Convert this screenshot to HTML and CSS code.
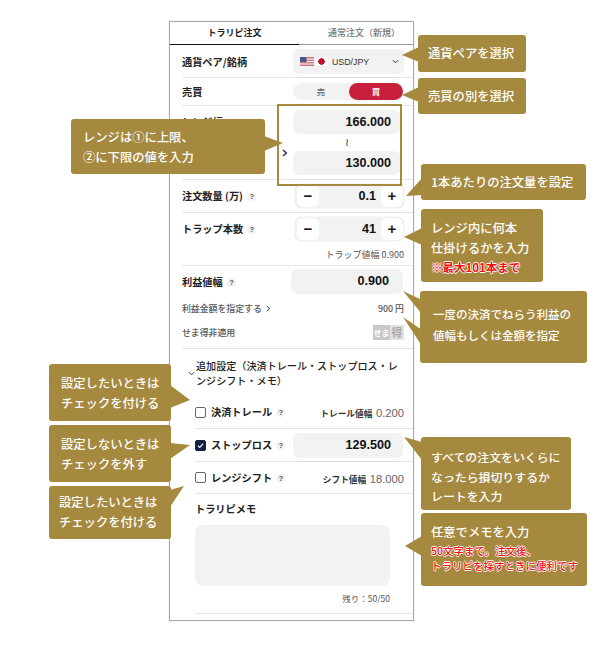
FILE: index.html
```html
<!DOCTYPE html>
<html lang="ja">
<head>
<meta charset="utf-8">
<title>トラリピ注文</title>
<link rel="stylesheet" href="styles.css">
</head>
<body>
<div class="stage">
  <main class="panel">
    <div class="tabs">
      <div class="tab tab-on">トラリピ注文</div>
      <div class="tab tab-off">通常注文（新規）</div>
    </div>

    <div class="row row-pair">
      <span class="label">通貨ペア/銘柄</span>
      <div class="select">
        <svg class="flag" viewBox="0 0 14 9" aria-hidden="true">
          <rect width="14" height="9" fill="#c9737f"/>
          <rect y="1.4" width="14" height="1.2" fill="#f3e8e8"/>
          <rect y="3.9" width="14" height="1.2" fill="#f3e8e8"/>
          <rect y="6.4" width="14" height="1.2" fill="#f3e8e8"/>
          <rect width="6.5" height="5" fill="#4a5688"/>
        </svg>
        <span class="jp-flag"></span>
        <span class="pair-name">USD/JPY</span>
        <svg class="caret" viewBox="0 0 8 5" aria-hidden="true"><path d="M1 1l3 3 3-3" fill="none" stroke="#1d2a44" stroke-width="1.1"/></svg>
      </div>
    </div>

    <div class="row row-side">
      <span class="label">売買</span>
      <div class="toggle">
        <span class="side">売</span>
        <span class="side side-on">買</span>
      </div>
    </div>

    <div class="row row-range">
      <div class="range-label">
        <span class="label">レンジ幅 <span class="help">?</span></span>
        <svg class="chev" viewBox="0 0 6 8" aria-hidden="true"><path d="M1 1l3.4 3L1 7" fill="none" stroke="#14264d" stroke-width="1.3"/></svg>
      </div>
      <div class="range-fields">
        <div class="field field-range">166.000</div>
        <div class="tilde">≀</div>
        <div class="field field-range">130.000</div>
      </div>
    </div>

    <div class="row row-qty">
      <span class="label">注文数量 (万) <span class="help">?</span></span>
      <div class="stepper">
        <span class="step">−</span>
        <span class="step-value">0.1</span>
        <span class="step">+</span>
      </div>
    </div>

    <div class="row row-trap">
      <div class="trap-top">
        <span class="label">トラップ本数 <span class="help">?</span></span>
        <div class="stepper">
          <span class="step">−</span>
          <span class="step-value">41</span>
          <span class="step">+</span>
        </div>
      </div>
      <div class="note">トラップ値幅 0.900</div>
    </div>

    <div class="row row-profit">
      <div class="profit-top">
        <span class="label">利益値幅 <span class="help">?</span></span>
        <div class="field field-profit">0.900</div>
      </div>
      <div class="profit-line profit-amount">
        <span class="small">利益金額を指定する<svg class="chev-sm" viewBox="0 0 6 8" aria-hidden="true"><path d="M1 1l3.4 3L1 7" fill="none" stroke="#222" stroke-width="1.1"/></svg></span>
        <span class="small">900 円</span>
      </div>
      <div class="profit-line profit-sema">
        <span class="small">せま得非適用</span>
        <span class="sema"><span class="sema-a">せま</span><span class="sema-b">得</span></span>
      </div>
    </div>

    <div class="more">
      <svg class="more-caret" viewBox="0 0 8 5" aria-hidden="true"><path d="M1 1l3 3 3-3" fill="none" stroke="#1d2a44" stroke-width="1.1"/></svg>
      <span class="more-text">追加設定（決済トレール・ストップロス・レンジシフト・メモ）</span>
    </div>

    <div class="opt opt-trail">
      <span class="check"></span>
      <span class="label">決済トレール <span class="help">?</span></span>
      <span class="opt-right"><b class="opt-key">トレール値幅</b> <span class="opt-val">0.200</span></span>
    </div>
    <div class="opt opt-stop">
      <span class="check check-on"><svg viewBox="0 0 12 12" aria-hidden="true"><path d="M2.5 6.2l2.5 2.4 4.6-5" fill="none" stroke="#fff" stroke-width="1.5"/></svg></span>
      <span class="label">ストップロス <span class="help">?</span></span>
      <div class="field field-stop">129.500</div>
    </div>
    <div class="opt opt-shift">
      <span class="check"></span>
      <span class="label">レンジシフト <span class="help">?</span></span>
      <span class="opt-right"><b class="opt-key">シフト値幅</b> <span class="opt-val">18.000</span></span>
    </div>

    <div class="memo">
      <div class="label memo-title">トラリピメモ</div>
      <div class="memo-box"></div>
      <div class="memo-count">残り：50/50</div>
    </div>
  </main>

  <div class="range-frame"></div>

  <svg class="tails" viewBox="0 0 600 668" aria-hidden="true">
    <polygon points="419,47 402,55 419,62"/>
    <polygon points="419,87 402,95 419,102"/>
    <polygon points="422,178 406,196 422,195"/>
    <polygon points="422,228 404,237 422,245"/>
    <polygon points="422,300 403,291 422,314"/>
    <polygon points="422,330 403,317 422,346"/>
    <polygon points="422,442 404,437 422,460"/>
    <polygon points="422,536 405,546 422,556"/>
    <polygon points="264,136 283,143 264,151"/>
    <polygon points="170,385 190,400 170,408"/>
    <polygon points="170,443 190,445 170,459"/>
    <polygon points="170,490 184,486 170,507"/>
  </svg>

  <div class="callout c-pair">通貨ペアを選択</div>
  <div class="callout c-side">売買の別を選択</div>
  <div class="callout c-range">レンジは①に上限、<br>②に下限の値を入力</div>
  <div class="callout c-qty">1本あたりの注文量を設定</div>
  <div class="callout c-trap">レンジ内に何本<br>仕掛けるかを入力<br><span class="warn warn-big">※最大101本まで</span></div>
  <div class="callout c-profit">一度の決済でねらう利益の<br>値幅もしくは金額を指定</div>
  <div class="callout c-stop">すべての注文をいくらに<br>なったら損切りするか<br>レートを入力</div>
  <div class="callout c-memo">任意でメモを入力<span class="warn warn-small">50文字まで。注文後、<br>トラリピを探すときに便利です</span></div>
  <div class="callout c-left1">設定したいときは<br>チェックを付ける</div>
  <div class="callout c-left2">設定しないときは<br>チェックを外す</div>
  <div class="callout c-left3">設定したいときは<br>チェックを付ける</div>
</div>
</body>
</html>
```
FILE: styles.css
```css
* { box-sizing: border-box; }
html, body { margin: 0; padding: 0; background: #fff; }
body {
  font-family: "Noto Sans CJK JP", "Liberation Sans", sans-serif;
  color: #222;
  overflow: hidden;
}
.stage {
  position: relative;
  width: 600px;
  height: 668px;
  padding: 21px 0 0 169px;
}
.panel {
  width: 245px;
  height: 600px;
  border: 1px solid #a9a9a9;
  background: #fff;
  box-shadow: 0 0 1px #bbb;
}

/* tabs */
.tabs {
  display: flex;
  height: 23px;
  border-bottom: 1px solid #999;
}
.tab {
  height: 23px;
  display: flex;
  align-items: center;
  justify-content: center;
  font-size: 9px;
  padding-bottom: 2px;
}
.tab-on { width: 129px; font-weight: 700; border-bottom: 1.5px solid #111; }
.tab-off { width: 114px; color: #777; font-weight: 500; padding-left: 16px; }

/* rows */
.row {
  margin-left: 12px;
  border-bottom: 1px solid #e4e4e4;
  display: flex;
  justify-content: space-between;
  align-items: center;
}
.label { font-size: 10.2px; font-weight: 700; color: #222; white-space: nowrap; line-height: 14px; }
.help {
  display: inline-block;
  width: 9px;
  height: 9px;
  margin-left: 2px;
  border-radius: 50%;
  background: #f1f1f1;
  color: #555;
  font: 700 7px/9px "Liberation Sans", sans-serif;
  text-align: center;
  vertical-align: 1px;
}
.row-pair { height: 33px; padding: 1px 9px 0 0; }
.select {
  width: 111px;
  height: 25px;
  background: #f2f2f2;
  border-radius: 6px;
  display: flex;
  align-items: center;
  padding-left: 7px;
}
.flag { width: 14px; height: 9px; display: block; }
.jp-flag {
  width: 13px;
  height: 9px;
  margin-left: 1px;
  background: radial-gradient(circle at center, #c2102e 0 3px, #fff 3.4px);
}
.pair-name { font: 400 8.8px "Liberation Sans", sans-serif; margin-left: 4px; color: #333; }
.caret { width: 7px; height: 5px; margin-left: 23px; }

.row-side { height: 28px; padding: 0 10px 0 0; }
.toggle {
  width: 110px;
  height: 17px;
  background: #f2f2f2;
  border-radius: 9px;
  display: flex;
  align-items: center;
}
.side { width: 56px; text-align: center; font-size: 8.5px; font-weight: 500; color: #666; line-height: 17px; }
.side-on { width: 54px; background: #c8203c; color: #fff; font-weight: 700; border-radius: 9px; }

.row-range { height: 74px; padding: 0 12px 0 0; align-items: flex-start; }
.range-label { width: 110px; height: 70px; }
.range-label .label { display: block; margin-top: 9px; }
.chev { width: 6px; height: 8px; display: block; margin: 20px 0 0 100px; }
.range-fields { width: 108px; padding-top: 4px; }
.field {
  background: #f2f2f2;
  border-radius: 7px;
  height: 25px;
  font: 700 12.6px/24px "Liberation Sans", sans-serif;
  color: #111;
  text-align: right;
  padding-right: 10px;
}
.field-range { height: 24px; }
.tilde { height: 17px; line-height: 17px; font: 400 11px/17px "DejaVu Sans", sans-serif; text-align: center; color: #444; }

.row-qty { height: 33px; padding: 0 9px 0 0; }
.stepper {
  width: 109px;
  height: 24px;
  background: #f2f2f2;
  border-radius: 7px;
  box-shadow: 0 0 1px #bdbdbd;
  display: flex;
  align-items: center;
  padding: 0 1px 0 2px;
}
.step {
  width: 22px;
  height: 22px;
  background: #fff;
  border-radius: 6px;
  font: 700 15px/21px "Liberation Sans", sans-serif;
  text-align: center;
  color: #1a1a1a;
}
.step-value {
  flex: 1;
  text-align: right;
  padding-right: 5px;
  font: 700 12.6px "Liberation Sans", sans-serif;
  color: #111;
}

.row-trap { height: 53px; padding: 4px 9px 0 0; display: block; }
.trap-top { display: flex; justify-content: space-between; align-items: center; }
.note { font-size: 9px; color: #555; text-align: right; line-height: 13px; margin-top: 7px; }

.row-profit { height: 83px; padding: 3px 10px 0 0; display: block; }
.profit-top { display: flex; justify-content: space-between; align-items: center; }
.field-profit { width: 112px; padding-right: 14px; }
.profit-line { display: flex; justify-content: space-between; align-items: center; height: 15px; }
.profit-amount { margin-top: 7px; margin-right: -1px; }
.profit-sema { margin-top: 9px; margin-right: -1px; }
.small { font-size: 8.9px; color: #555; font-weight: 500; white-space: nowrap; }
.chev-sm { width: 5px; height: 7px; margin-left: 4px; }
.sema {
  width: 31px;
  height: 15px;
  display: flex;
  background: #c8c8c8;
  overflow: hidden;
  white-space: nowrap;
}
.sema-a { width: 17px; color: #fff; font-size: 8px; font-weight: 700; line-height: 15px; text-align: center; }
.sema-b { width: 14px; background: #e2e2e2; color: #a8a8a8; font-size: 11px; font-weight: 700; line-height: 15px; text-align: center; }

/* extra settings */
.more {
  height: 47px;
  margin-left: 18px;
  padding: 9px 8px 0 0;
  display: flex;
  align-items: flex-start;
}
.more-caret { width: 7px; height: 5px; flex: none; margin: 13px 1px 0 0; }
.more-text { font-size: 10.1px; font-weight: 500; line-height: 15px; color: #222; }
.opt {
  height: 33px;
  margin-left: 25px;
  border-bottom: 1px solid #e4e4e4;
  display: flex;
  align-items: center;
  padding-right: 9px;
}
.opt-shift { height: 32px; }
.opt .label { margin-left: 5px; }
.check {
  width: 11px;
  height: 11px;
  border: 1px solid #666;
  border-radius: 2px;
  flex: none;
  background: #fff;
}
.check-on { background: #14203f; border-color: #14203f; }
.check-on svg { display: block; width: 9px; height: 9px; }
.opt-right { margin-left: auto; white-space: nowrap; line-height: 14px; }
.opt-key { font-size: 8.7px; font-weight: 700; color: #333; }
.opt-val { font: 400 11.2px "Liberation Sans", sans-serif; color: #666; }
.field-stop { width: 110px; margin-left: auto; line-height: 25px; padding-right: 12px; }
.opt-stop { padding-right: 10px; }

.memo { margin-left: 25px; height: 120px; border-bottom: 1px solid #e4e4e4; padding-top: 8px; }
.memo-title { height: 14px; }
.memo-box {
  width: 195px;
  height: 61px;
  margin-top: 9px;
  background: #f2f2f2;
  border-radius: 8px;
}
.memo-count {
  width: 195px;
  text-align: right;
  font-size: 8.5px;
  color: #555;
  line-height: 12px;
  margin-top: 6px;
}

/* overlays */
.range-frame {
  position: absolute;
  left: 277px;
  top: 104px;
  width: 125px;
  height: 82px;
  border: 2px solid #a5893f;
}
.tails {
  position: absolute;
  left: 0;
  top: 0;
  width: 600px;
  height: 668px;
  fill: #a5893f;
  pointer-events: none;
}
.callout {
  position: absolute;
  display: block;
  background: #a5893f;
  border-radius: 3px;
  color: #fff;
  font-size: 12.3px;
  font-weight: 500;
  white-space: nowrap;
  line-height: 19.5px;
  padding-left: 10px;
}
.c-pair { left: 418px; top: 35px; width: 108px; height: 37px; line-height: 37px; }
.c-side { left: 418px; top: 78px; width: 108px; height: 36px; line-height: 36px; }
.c-range { left: 71px; top: 119px; width: 194px; height: 55px; padding: 9px 0 0 12px; }
.c-qty { left: 421px; top: 164px; width: 165px; height: 36px; line-height: 36px; }
.c-trap { left: 421px; top: 209px; width: 122px; height: 73px; padding-top: 10px; }
.c-profit { left: 420px; top: 291px; width: 167px; height: 72px; padding: 13px 0 0 13px; line-height: 21px; font-size: 11.5px; }
.c-stop { left: 421px; top: 437px; width: 150px; height: 73px; padding-top: 10px; font-size: 11.9px; }
.c-memo { left: 421px; top: 513px; width: 166px; height: 73px; padding-top: 10px; }
.c-left1 { left: 49px; top: 364px; width: 122px; height: 57px; padding: 9px 0 0 12px; line-height: 20px; }
.c-left2 { left: 49px; top: 425px; width: 122px; height: 57px; padding: 9px 0 0 12px; line-height: 20px; }
.c-left3 { left: 49px; top: 486px; width: 122px; height: 53px; padding: 7px 0 0 10px; }
.warn {
  color: #f01010;
  font-weight: 700;
  text-shadow: 0.8px 0 0 #fff, -0.8px 0 0 #fff, 0 0.8px 0 #fff, 0 -0.8px 0 #fff;
}
.warn-big { font-size: 11.5px; }
.warn-small { display: block; font-size: 10.5px; font-weight: 500; line-height: 15px; margin-top: 0; }
```
